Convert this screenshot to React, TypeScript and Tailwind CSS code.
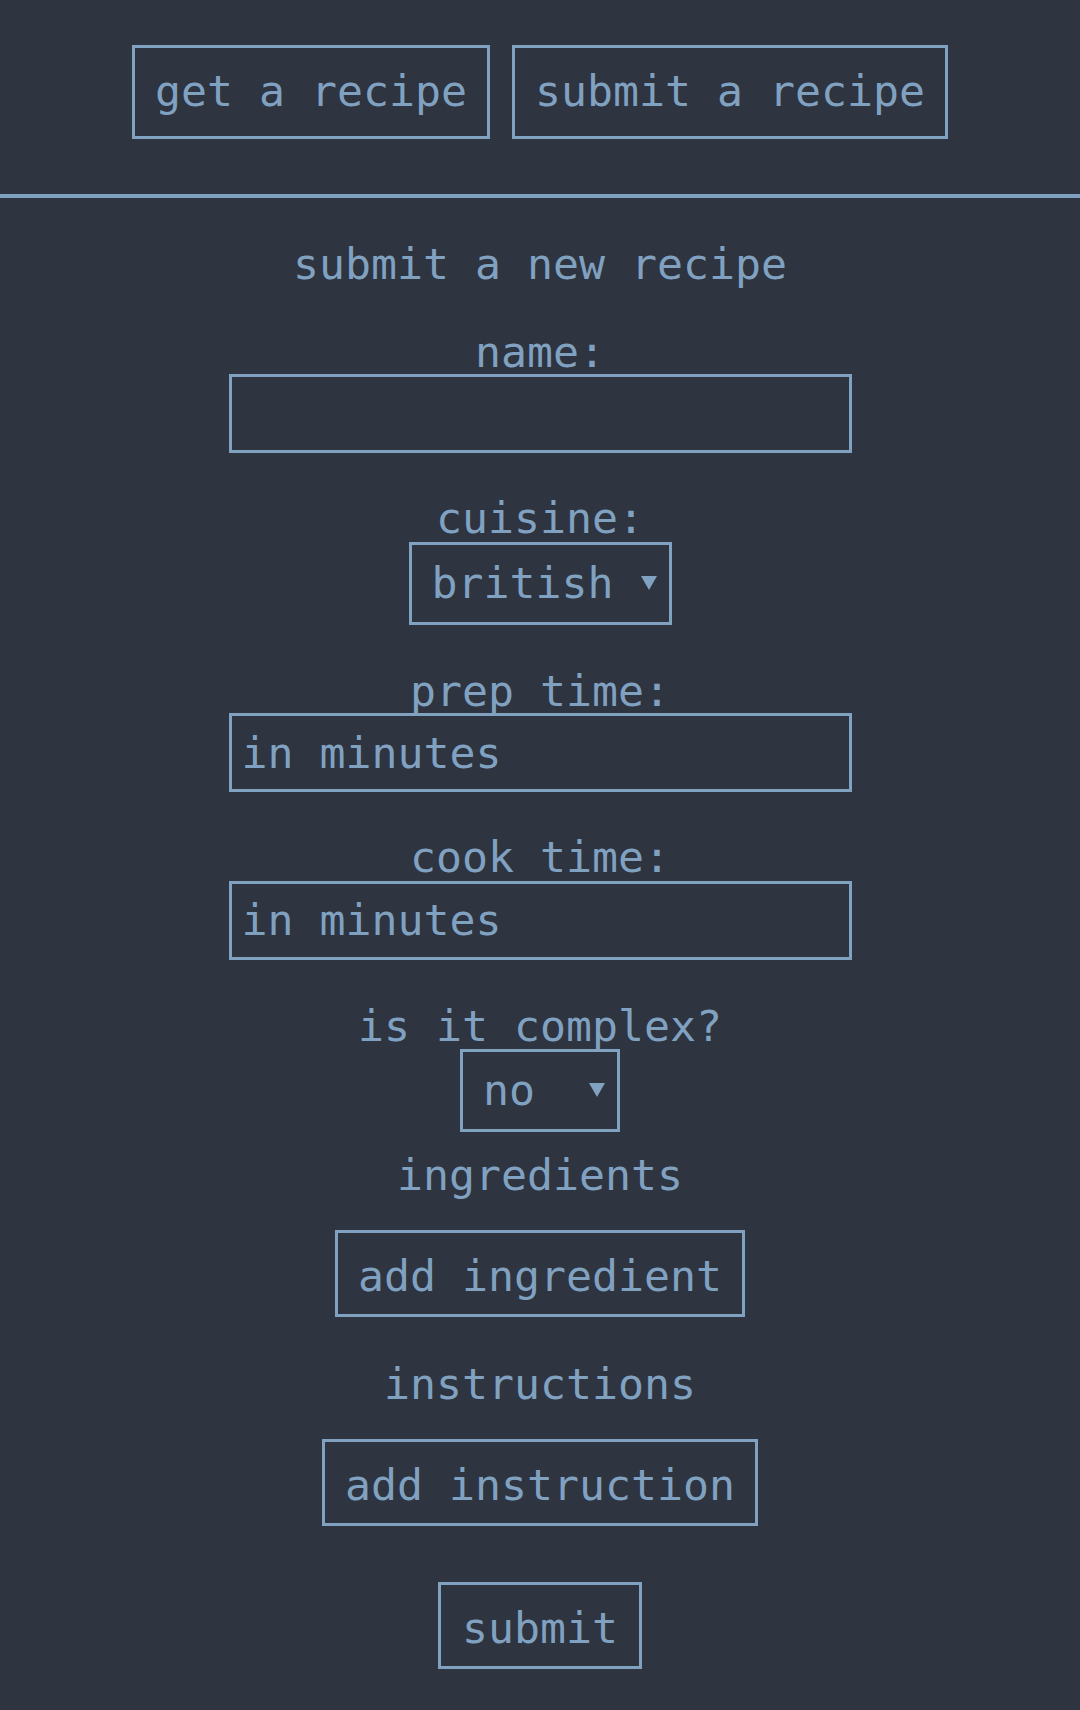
import { useState } from "react";

const CUISINES = ["british", "italian", "chinese", "indian", "mexican", "french"];

const Arrow = () => (
  <svg
    className="pointer-events-none absolute right-[12px] top-1/2 -translate-y-1/2"
    width="16"
    height="14"
    viewBox="0 0 16 14"
  >
    <polygon points="0,0 16,0 8,14" fill="#81a1c1" />
  </svg>
);

const Label = ({ text, className }: { text: string; className: string }) => (
  <label className={`block leading-none ${className}`}>{text}</label>
);

export default function App() {
  const [cuisine, setCuisine] = useState("british");
  const [complex, setComplex] = useState("no");

  return (
    <div className="min-h-screen bg-[#2e3440] text-[#81a1c1] font-['DejaVu_Sans_Mono',monospace] text-[43.2px]">
      <header className="flex justify-center gap-[22px] pt-[45px] pb-[55px] border-b-[4px] border-[#81a1c1]">
        <button className="border-[3px] border-[#81a1c1] px-[20px] pt-[18px] pb-[20px] leading-[50px]">
          get a recipe
        </button>
        <button className="border-[3px] border-[#81a1c1] px-[20px] pt-[18px] pb-[20px] leading-[50px]">
          submit a recipe
        </button>
      </header>

      <form
        className="flex flex-col items-center"
        onSubmit={(e) => e.preventDefault()}
      >
        <h2 className="mt-[45px] leading-none">submit a new recipe</h2>

        <Label text="name:" className="mt-[45px]" />
        <input
          type="text"
          className="w-[623px] h-[79px] border-[3px] border-[#81a1c1] px-[10px] outline-none"
        />

        <Label text="cuisine:" className="mt-[44px]" />
        <div className="relative mt-[1px] w-[263px] h-[83px] border-[3px] border-[#81a1c1]">
          <select
            value={cuisine}
            onChange={(e) => setCuisine(e.target.value)}
            className="appearance-none w-full h-full bg-transparent pl-[20px] outline-none"
          >
            {CUISINES.map((c) => (
              <option key={c} value={c} className="bg-[#2e3440]">
                {c}
              </option>
            ))}
          </select>
          <Arrow />
        </div>

        <Label text="prep time:" className="mt-[45px]" />
        <input
          type="text"
          placeholder="in minutes"
          className="mt-[0.5px] w-[623px] h-[79px] border-[3px] border-[#81a1c1] px-[10px] outline-none placeholder:text-[#81a1c1]"
        />

        <Label text="cook time:" className="mt-[44px]" />
        <input
          type="text"
          placeholder="in minutes"
          className="mt-[1px] w-[623px] h-[79px] border-[3px] border-[#81a1c1] px-[10px] outline-none placeholder:text-[#81a1c1]"
        />

        <Label text="is it complex?" className="mt-[45px]" />
        <div className="relative mt-[1px] w-[160px] h-[83px] border-[3px] border-[#81a1c1]">
          <select
            value={complex}
            onChange={(e) => setComplex(e.target.value)}
            className="appearance-none w-full h-full bg-transparent pl-[20px] outline-none"
          >
            <option value="no" className="bg-[#2e3440]">no</option>
            <option value="yes" className="bg-[#2e3440]">yes</option>
          </select>
          <Arrow />
        </div>

        <h3 className="mt-[22px] leading-none">ingredients</h3>
        <button
          type="button"
          className="mt-[33px] border-[3px] border-[#81a1c1] px-[20px] pt-[18px] pb-[12px] leading-[51px]"
        >
          add ingredient
        </button>

        <h3 className="mt-[46px] leading-none">instructions</h3>
        <button
          type="button"
          className="mt-[33px] border-[3px] border-[#81a1c1] px-[20px] pt-[18px] pb-[12px] leading-[51px]"
        >
          add instruction
        </button>

        <button
          type="submit"
          className="mt-[56px] border-[3px] border-[#81a1c1] px-[21px] pt-[18px] pb-[12px] leading-[51px]"
        >
          submit
        </button>
      </form>
    </div>
  );
}
